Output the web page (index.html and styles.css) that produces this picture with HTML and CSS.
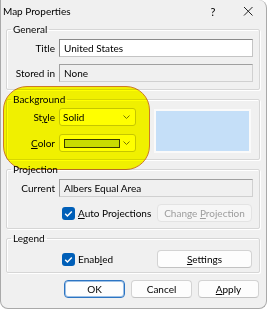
FILE: index.html
```html
<!DOCTYPE html>
<html lang="en">
<head>
  <meta charset="UTF-8" />
  <meta name="viewport" content="width=device-width, initial-scale=1.0"/>
  <title>Map Properties</title>
  <link rel="stylesheet" href="styles.css">
</head>
<body>
  <div class="dialog">
    <div class="titlebar">
      <span class="title">Map Properties</span>
      <span class="help">?</span>
      <span class="close">
        <svg width="10" height="10" viewBox="0 0 10 10"><path d="M1 1 L9.5 9.5 M9.5 1 L1 9.5" stroke="#222" stroke-width="1" fill="none"/></svg>
      </span>
    </div>

    <div class="content">
      <fieldset class="group">
        <legend>General</legend>
        <div class="group-body general">
          <div class="row">
            <label>Title</label>
            <div class="field">United States</div>
          </div>
          <div class="row">
            <label>Stored in</label>
            <div class="field readonly">None</div>
          </div>
        </div>
      </fieldset>

      <fieldset class="group">
        <legend>Background</legend>
        <div class="group-body background">
          <div class="combos">
            <div class="row">
              <label>St<u>y</u>le</label>
              <div class="combo">
                <span>Solid</span>
                <svg class="chevron" width="7" height="4" viewBox="0 0 7 4"><path d="M0.5 0.5 L3.5 3.5 L6.5 0.5" stroke="#777" fill="none"/></svg>
              </div>
            </div>
            <div class="row">
              <label><u>C</u>olor</label>
              <div class="combo">
                <span class="swatch"></span>
                <svg class="chevron" width="7" height="4" viewBox="0 0 7 4"><path d="M0.5 0.5 L3.5 3.5 L6.5 0.5" stroke="#777" fill="none"/></svg>
              </div>
            </div>
          </div>
          <div class="preview"></div>
        </div>
      </fieldset>

      <fieldset class="group">
        <legend>Projection</legend>
        <div class="group-body projection">
          <div class="row">
            <label>Current</label>
            <div class="field readonly">Albers Equal Area</div>
          </div>
          <div class="check-row">
            <span class="checkbox"><svg width="13" height="13" viewBox="0 0 13 13"><path d="M3.2 6.8 L5.4 9 L9.8 4.4" stroke="#fff" stroke-width="1.4" fill="none"/></svg></span>
            <span class="check-label"><u>A</u>uto Projections</span>
            <button class="btn disabled">Change <u>P</u>rojection</button>
          </div>
        </div>
      </fieldset>

      <fieldset class="group">
        <legend>Legend</legend>
        <div class="group-body legend-body">
          <div class="check-row">
            <span class="checkbox"><svg width="13" height="13" viewBox="0 0 13 13"><path d="M3.2 6.8 L5.4 9 L9.8 4.4" stroke="#fff" stroke-width="1.4" fill="none"/></svg></span>
            <span class="check-label">Enab<u>l</u>ed</span>
            <button class="btn"><u>S</u>ettings</button>
          </div>
        </div>
      </fieldset>

      <div class="footer">
        <button class="btn default">OK</button>
        <button class="btn">Cancel</button>
        <button class="btn"><u>A</u>pply</button>
      </div>
    </div>

    <div class="highlight"></div>
  </div>
</body>
</html>
```

FILE: styles.css
```css
* {
  margin: 0;
  padding: 0;
  box-sizing: border-box;
}

body {
  font-family: 'Lato', 'Liberation Sans', sans-serif;
  font-size: 10px;
  color: #000;
  background: #fff;
}

.dialog {
  position: relative;
  width: 267px;
  height: 309px;
  background: #f0f0f0;
  border: 1px solid #a9a9a9;
  border-top: none;
  border-radius: 0 8px 8px 8px;
}

.titlebar {
  height: 22px;
  display: flex;
  align-items: center;
  padding: 0 13px 0 2px;
}

.titlebar .title {
  flex: 1;
}

.titlebar .help {
  width: 10px;
  text-align: center;
  margin-right: 25px;
  font-size: 11px;
}

.titlebar .close {
  width: 10px;
  height: 10px;
  display: flex;
}

.content {
  padding: 0 6px 0 5px;
}

.group {
  border: 1px solid #d6d6d6;
  border-radius: 2px;
  box-shadow: inset 1px 1px 0 #fff, 1px 1px 0 #fff;
  margin: 0 0 2px 0;
  padding: 0;
  min-width: 0;
}

.group legend {
  margin-left: 4px;
  padding: 0 2px;
  line-height: 14px;
}

.group-body {
  padding: 3px 6px 7px 0;
}

.row {
  display: flex;
  align-items: center;
  height: 18px;
}

.row + .row {
  margin-top: 7px;
}

.row label {
  width: 48px;
  margin-right: 4px;
  text-align: right;
}

.field {
  flex: 1;
  height: 18px;
  line-height: 16px;
  padding: 0 4px;
  background: #fff;
  border: 1px solid #9a9a9a;
  border-color: #8a8a8a #c4c4c4 #c4c4c4 #8a8a8a;
}

.field.readonly {
  background: #f0f0f0;
  border-color: #a0a0a0 #d0d0d0 #d0d0d0 #a0a0a0;
}

.background {
  display: flex;
  align-items: flex-start;
  padding: 2px 0 6px 0;
}

.background .row + .row {
  margin-top: 8px;
}

.combo {
  width: 77px;
  height: 18px;
  display: flex;
  align-items: center;
  padding: 0 5px 0 3px;
  background: #fff;
  border: 1px solid #c6c6c6;
  border-radius: 3px;
}

.combo span {
  flex: 1;
}

.combo .swatch {
  flex: none;
  width: 56px;
  height: 9px;
  margin-left: 1px;
  background: #c8dc10;
  border: 1px solid #3a3a3a;
  margin-right: auto;
}

.chevron {
  flex: none;
}

.preview {
  width: 97px;
  height: 44px;
  margin: 1px 8px 0 auto;
  background: #c5dff8;
  border: 2px solid #fafafa;
}

.projection {
  padding-bottom: 6px;
}

.check-row {
  display: flex;
  align-items: center;
  height: 18px;
  margin-top: 7px;
  padding-left: 55px;
}

.checkbox {
  width: 13px;
  height: 13px;
  border-radius: 3px;
  background: #005fb8;
  display: flex;
}

.check-label {
  margin-left: 3px;
}

.btn {
  font-family: inherit;
  font-size: 10px;
  color: #000;
  height: 18px;
  background: #fdfdfd;
  border: 1px solid #d3d3d3;
  border-bottom-color: #c2c2c2;
  border-radius: 4px;
}

.check-row .btn {
  width: 95px;
  margin-left: auto;
  margin-right: 1px;
}

.btn.disabled {
  background: #f6f6f6;
  border-color: #e3e3e3;
  color: #9d9d9d;
}

.legend-body {
  padding: 5px 6px 4px 0;
}

.legend-body .check-row {
  margin-top: 0;
}

.footer {
  display: flex;
  justify-content: flex-end;
  gap: 6px;
  margin-top: 7px;
  padding-right: 1px;
}

.footer .btn {
  width: 61px;
}

.btn.default {
  border: 1px solid #2c74c2;
  box-shadow: inset 0 0 0 1px #9cc0e6;
}

.highlight {
  position: absolute;
  left: 2px;
  top: 86px;
  width: 147px;
  height: 84px;
  border-radius: 24px;
  background: #ffff00;
  border: 1px solid #d9822b;
  mix-blend-mode: multiply;
}
```
